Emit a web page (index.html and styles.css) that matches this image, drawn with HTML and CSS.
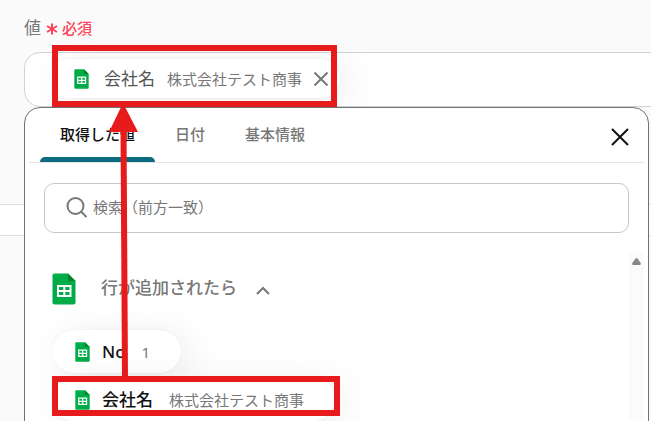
FILE: index.html
```
<!DOCTYPE html>
<html lang="ja">
<head>
  <meta charset="UTF-8">
  <meta name="viewport" content="width=device-width, initial-scale=1">
  <title>値の設定</title>
  <link rel="stylesheet" href="styles.css">
</head>
<body>

  <!-- Spreadsheet icon shared by the chips and the group heading -->
  <svg class="defs" width="0" height="0" aria-hidden="true">
    <symbol id="sheet" viewBox="0 0 24 32">
      <path fill="#00ac47" d="M2.500 0.500H16L23.500 8V29.500Q23.500 31.500 21.500 31.500H2.500Q0.500 31.500 0.500 29.500V2.500Q0.500 0.500 2.500 0.500Z"/>
      <path fill="#00832d" d="M16 0.500L23.500 8H16Z"/>
      <path fill="#fff" fill-rule="evenodd" d="M5 12H19.500V24H5ZM7 14V17H11.300V14ZM13.300 14V17H17.500V14ZM7 19V22H11.300V19ZM13.300 19V22H17.500V19Z"/>
    </symbol>
  </svg>

  <div class="page">
    <div class="label">
      <span class="label-name">値</span>
      <svg class="asterisk" viewBox="0 0 12 12" aria-hidden="true"><path d="M6 0.500V11.500M1 3L11 9M11 3L1 9"/></svg>
      <span class="required">必須</span>
    </div>

    <div class="field">
      <div class="chip selected">
        <svg class="sheet-icon"><use href="#sheet"/></svg>
        <span class="chip-name">会社名</span>
        <span class="chip-value">株式会社テスト商事</span>
        <button type="button" class="remove" aria-label="削除">
          <svg viewBox="0 0 14 14"><path d="M0.500 0.500L13.500 13.500M13.500 0.500L0.500 13.500"/></svg>
        </button>
      </div>
    </div>

    <div class="row-strip"></div>

    <div class="panel">
      <div class="panel-head">
        <div class="tabs" role="tablist">
          <button type="button" class="tab active" role="tab" aria-selected="true">取得した値</button>
          <button type="button" class="tab" role="tab" aria-selected="false">日付</button>
          <button type="button" class="tab" role="tab" aria-selected="false">基本情報</button>
        </div>
        <button type="button" class="close" aria-label="閉じる">
          <svg viewBox="0 0 18 18"><path d="M1 1L17 17M17 1L1 17"/></svg>
        </button>
      </div>

      <label class="search">
        <svg viewBox="0 0 22 22" aria-hidden="true"><circle cx="9.500" cy="9" r="8"/><path d="M15 14.500L20.500 20"/></svg>
        <input type="text" placeholder="検索（前方一致）" aria-label="検索（前方一致）">
      </label>

      <div class="results">
        <div class="list">
          <button type="button" class="group">
            <svg class="sheet-icon large"><use href="#sheet"/></svg>
            <span>行が追加されたら</span>
            <svg class="caret" viewBox="0 0 14 9" aria-hidden="true"><path d="M1 8L7 2L13 8"/></svg>
          </button>
          <button type="button" class="chip">
            <svg class="sheet-icon"><use href="#sheet"/></svg>
            <span class="chip-name">No</span>
            <span class="chip-value">1</span>
          </button>
          <button type="button" class="chip">
            <svg class="sheet-icon"><use href="#sheet"/></svg>
            <span class="chip-name">会社名</span>
            <span class="chip-value">株式会社テスト商事</span>
          </button>
        </div>
        <div class="scrollbar">
          <svg viewBox="0 0 9 7"><path d="M3.500 0.500Q4.500 -0.500 5.500 0.500L8.700 5Q9 7 8 7H1Q0 7 0.300 5Z"/></svg>
        </div>
      </div>
    </div>

    <!-- Guide marks: pick the lower item to fill the field above -->
    <svg class="marks" width="360" height="421" aria-hidden="true">
      <rect x="55" y="48" width="279" height="56"/>
      <rect x="55" y="379" width="282" height="34"/>
      <path class="line" d="M125 378L123.500 128"/>
      <path class="head" d="M123 103L138 132H109Z"/>
    </svg>
  </div>

</body>
</html>
```
FILE: styles.css
```
* { box-sizing: border-box; margin: 0; padding: 0; }
body {
  font-family: "Noto Sans", "Noto Sans CJK JP", sans-serif;
  font-size: 15px;
  line-height: 22px;
  color: #777;
  background-color: #fafafa;
}
button {
  font: inherit;
  color: inherit;
  background: none;
  border: none;
  cursor: pointer;
}
svg { flex: none; display: block; }
.defs { position: absolute; }
.page {
  position: relative;
  min-height: 100vh;
  padding-top: 16px;
  overflow: hidden;
}

/* label */
.label {
  display: flex; align-items: center;
  height: 24px;
  margin: 0 0 12px 24px;
}
.label-name { font-size: 17px; }
.asterisk {
  width: 12px; height: 12px;
  margin: 2px 4px 0 5px;
  stroke: #ff4558; stroke-width: 2;
}
.required { color: #ff4558; font-weight: 500; }

/* field */
.field {
  display: flex; align-items: center;
  height: 55px;
  margin-left: 24px;
  margin-right: -24px;
  padding: 0 0 2px 25px;
  background-color: #fff;
  border: 1px solid #ced3da;
  border-radius: 16px;
}
.chip {
  display: flex; align-items: center;
  height: 43px;
  padding: 0 31px 0 23px;
  border-radius: 22px;
  background-color: #fff;
  box-shadow: 0 0 2px rgba(0,0,0,0.08), 8px 4px 36px rgba(0,0,0,0.08);
  white-space: nowrap;
}
.sheet-icon { width: 15px; height: 20px; }
.chip-name {
  margin: 0 16px 0 12px;
  font-size: 17px; font-weight: 500; color: #111;
}
.chip.selected { height: 39px; padding: 0 12px 0 24px; }
.selected .chip-name {
  margin: 0 12px 0 15px;
  font-weight: 400; color: #555;
}
.remove { margin-left: 12px; }
.remove svg {
  width: 14px; height: 14px;
  stroke: #777; stroke-width: 2;
}
.row-strip {
  height: 32px;
  margin-top: 97px;
  background-color: #fff;
  border-top: 1px solid #ddd;
  border-bottom: 1px solid #ddd;
}

/* dropdown panel */
.panel {
  position: absolute;
  top: 107px; bottom: -24px; left: 24px; right: 2px;
  display: flex; flex-direction: column;
  padding: 0 4px;
  background-color: #fff;
  border: 1px solid #6f7174;
  border-radius: 16px;
}
.panel-head {
  display: flex; align-items: center; justify-content: space-between;
  height: 55px;
  padding: 0 15px 0 11px;
  border-bottom: 1px solid #e4e4e4;
}
.tabs { display: flex; height: 100%; }
.tab {
  position: relative;
  padding: 0 20px 2px;
  font-weight: 500;
}
.tab.active { color: #111; }
.tab.active::after {
  content: "";
  position: absolute;
  left: 0; right: 0; bottom: 0;
  height: 5px;
  background-color: #0b6b80;
  border-radius: 5px 5px 0 0;
}
.close { margin-top: 4px; }
.close svg {
  width: 18px; height: 18px;
  stroke: #111; stroke-width: 2;
}
.search {
  display: flex; align-items: center; gap: 5px;
  height: 50px;
  margin: 20px 15px 20px 15px;
  padding: 0 21px;
  border: 1px solid #c8c8c8;
  border-radius: 10px;
}
.search svg {
  width: 22px; height: 22px;
  fill: none; stroke: #777; stroke-width: 2;
}
.search input {
  flex: 1; min-width: 0;
  padding-bottom: 3px;
  font: inherit; color: #333;
  border: none; outline: none; background: none;
}
.search input::placeholder { color: #777; opacity: 1; }
.results { display: flex; flex: 1; min-height: 0; }
.list {
  flex: 1;
  display: flex; flex-direction: column; align-items: flex-start;
  gap: 5px;
  padding: 20px 0 0 23px;
}
.group {
  display: flex; align-items: center;
  height: 32px;
  margin-bottom: 20px;
  font-size: 17px; font-weight: 500;
}
.group span { padding-bottom: 2px; }
.sheet-icon.large { width: 24px; height: 32px; margin-right: 25px; }
.caret {
  width: 14px; height: 9px;
  margin: 3px 0 0 19px;
  fill: none; stroke: #777; stroke-width: 2;
}
.scrollbar {
  width: 15px;
  padding: 5px 3px;
  background-color: #fbfbfb;
}
.scrollbar svg { width: 9px; height: 7px; fill: #888; }

/* guide marks */
.marks {
  position: absolute;
  top: 0; left: 0;
  pointer-events: none;
}
.marks rect { fill: none; stroke: #e71b1b; stroke-width: 6; }
.marks .line { stroke: #e71b1b; stroke-width: 6; }
.marks .head { fill: #e71b1b; }
```
